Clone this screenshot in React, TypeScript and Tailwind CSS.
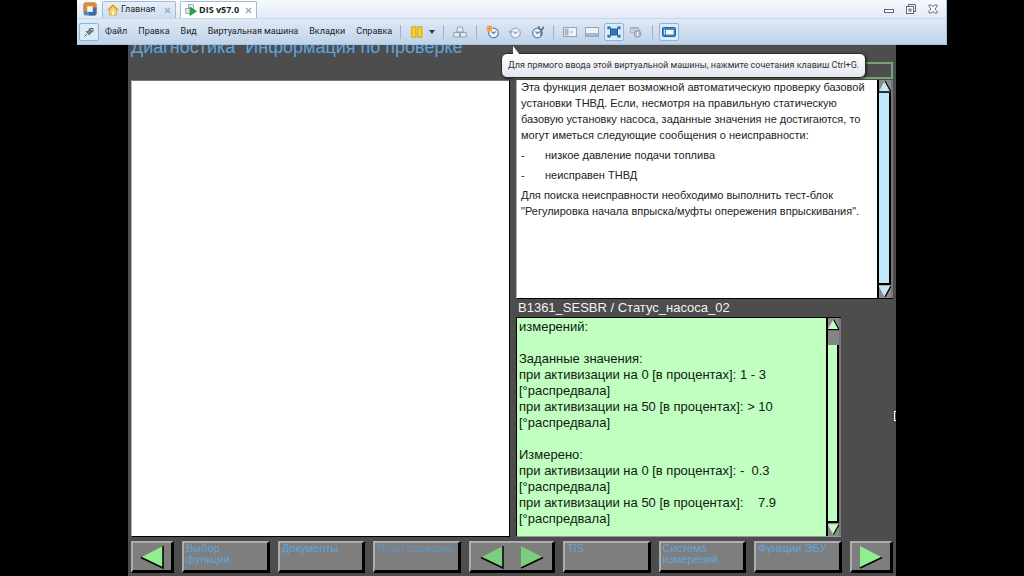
import type { ReactNode } from 'react';
import clsx from 'clsx';

const menuItems = ['Файл', 'Правка', 'Вид', 'Виртуальная машина', 'Вкладки', 'Справка'];

function Logo() {
  return (
    <svg viewBox="0 0 14 14" className="h-3.5 w-3.5">
      <rect x="0.5" y="0.5" width="13" height="13" rx="2" fill="#5d87ad" />
      <path d="M2.5.5h9a2 2 0 0 1 2 2v5H9.8V4.2H4.2V9H.5V2.5a2 2 0 0 1 2-2z" fill="#e58a2e" />
      <path d="M9.8 5.5h3.7v6a2 2 0 0 1-2 2H6V9.8h3.8z" fill="#3f6fa0" />
      <rect x="4.2" y="4.2" width="5.6" height="5.6" fill="#f4f7fb" />
    </svg>
  );
}

function HomeIcon() {
  return (
    <svg viewBox="0 0 12 12" className="h-3 w-3">
      <path d="M2.5 5.5V11h7V5.5L6 2z" fill="#f8d56a" stroke="#c8922a" strokeWidth="0.6" />
      <path d="M.8 6.2 6 1.2l5.2 5" fill="none" stroke="#dc9a2c" strokeWidth="1.4" />
      <path d="M5 11V7.5h2V11z" fill="#fff6d5" />
    </svg>
  );
}

function MachineIcon() {
  return (
    <svg viewBox="0 0 12 12" className="h-3 w-3">
      <rect x="3.5" y="0.7" width="5" height="5" fill="#e8f0f8" stroke="#7d9dbb" strokeWidth="0.8" />
      <rect x="0.7" y="4.5" width="5" height="5" fill="#dce7f2" stroke="#7d9dbb" strokeWidth="0.8" />
      <path d="M5 3l6.5 4.3L5 11.5z" fill="#22a83a" stroke="#148328" strokeWidth="0.6" />
    </svg>
  );
}

function CloseTab() {
  return (
    <button aria-label="Закрыть вкладку" className="ml-auto">
      <svg viewBox="0 0 7 7" className="h-[7px] w-[7px]">
        <path d="m1 1 5 5M6 1 1 6" stroke="#93afcf" strokeWidth="1.5" />
      </svg>
    </button>
  );
}

function PinIcon() {
  return (
    <svg viewBox="0 0 12 12" className="h-3 w-3" fill="none" stroke="#4b5563" strokeWidth="1">
      <path d="M1.5 10.5 4 8M2.8 5.2l4 4M4 6l3-2.8M6.2 8.5 9 5.5M6 2.5l3.8 3.8M7 2.5h3v3" />
      <path d="M4.5 6 7 3.7 8.5 5 6 7.8z" fill="#9aa5b3" />
    </svg>
  );
}

function PauseIcon() {
  return (
    <svg viewBox="0 0 12 12" className="h-3 w-3" fill="#f7cf2b" stroke="#d29a14" strokeWidth="0.8">
      <rect x="0.7" y="0.7" width="4.3" height="10.6" />
      <rect x="6.7" y="0.7" width="4.3" height="10.6" />
    </svg>
  );
}

function KeysIcon() {
  return (
    <svg viewBox="0 0 14 12" className="h-3 w-3.5" fill="#e6ebf1" stroke="#8b98a8" strokeWidth="0.9">
      <path d="M4.5 1h5l.7 5H3.8z" />
      <path d="M1 6.5h5.5V11h-6zM7.5 6.5H13l.5 4.5h-6z" />
    </svg>
  );
}

function ClockIcon({ kind }: { kind: 'take' | 'revert' | 'manage' }) {
  const tone = kind === 'revert' ? '#9aaabc' : '#5f7f9f';
  return (
    <svg viewBox="0 0 14 14" className="h-3.5 w-3.5" fill="none">
      <circle cx="7.5" cy="8" r="4.8" fill="#eaf2fa" stroke={tone} strokeWidth="1.2" />
      <path d="M5.5 6.5l2 2 2.3-2" stroke={tone} strokeWidth="1.1" />
      {kind === 'take' && (
        <path d="M3.5 0v7M0 3.5h7M1 1l5 5M6 1 1 6" stroke="#ef9a2c" strokeWidth="1.1" />
      )}
      {kind === 'revert' && <path d="M0 6h5L2.5 9z" fill={tone} />}
      {kind === 'manage' && (
        <path d="M9.5 1A2 2 0 0 0 11 4.5 2 2 0 0 0 13 1.5M11 4.5V11" stroke="#4f6478" strokeWidth="1.3" />
      )}
    </svg>
  );
}

function SidebarIcon() {
  return (
    <svg viewBox="0 0 14 12" className="h-3 w-3.5">
      <rect x="0.5" y="1.5" width="13" height="9" fill="#eef3f8" stroke="#95a5b8" />
      <rect x="1.5" y="2.5" width="4" height="7" fill="#a9b7c7" />
      <path d="M7 6h3" stroke="#95a5b8" />
    </svg>
  );
}

function ThumbnailBarIcon() {
  return (
    <svg viewBox="0 0 14 12" className="h-3 w-3.5">
      <rect x="0.5" y="1.5" width="13" height="9" fill="#eef3f8" stroke="#95a5b8" />
      <path d="M1 7h12v3H1z" fill="#a9b7c7" />
    </svg>
  );
}

function FullScreenIcon() {
  return (
    <svg viewBox="0 0 14 12" className="h-3 w-3.5">
      <rect x="3.5" y="3" width="7" height="6" fill="#2f78b8" stroke="#1d5a94" />
      <path
        d="M1 3.5V1h3M10 1h3v2.5M13 8.5V11h-3M4 11H1V8.5M1 1l2.5 2M13 1l-2.5 2M1 11l2.5-2M13 11l-2.5-2"
        fill="none"
        stroke="#2d5f90"
        strokeWidth="1.1"
      />
    </svg>
  );
}

function UnityIcon() {
  return (
    <svg viewBox="0 0 12 12" className="h-3 w-3">
      <path d="M.5 1.5h8v5h-8z" fill="#d5dde6" stroke="#a5b2c1" />
      <path d="M.5 2.5h8M2.5 4.5h8" stroke="#a5b2c1" />
      <circle cx="7.5" cy="8" r="3.4" fill="#b4bfcb" stroke="#93a1b1" />
      <path d="M7.5 6v4" stroke="#fff" />
    </svg>
  );
}

function ConsoleIcon() {
  return (
    <svg viewBox="0 0 14 12" className="h-3 w-3.5">
      <rect x="0.5" y="1.5" width="13" height="9" rx="1" fill="#3c86c4" stroke="#20639f" />
      <rect x="4" y="4" width="7.5" height="4.5" fill="#f4f9fd" />
      <path d="M2.5 3.5v5" stroke="#cfe4f5" />
    </svg>
  );
}

function Separator() {
  return <span className="h-3.5 w-px bg-[#9fb2cb]" />;
}

type ToolButtonProps = { label: string; active?: boolean; disabled?: boolean; children: ReactNode };

function ToolButton({ label, active, disabled, children }: ToolButtonProps) {
  return (
    <button
      aria-label={label}
      disabled={disabled}
      className={clsx(
        'flex h-[18px] w-5 items-center justify-center rounded-xs border',
        active ? 'border-[#8db4dc] bg-[#dcebfa]' : 'border-transparent',
      )}
    >
      {children}
    </button>
  );
}

function HostWindow() {
  return (
    <header className="relative z-10 mx-[77px] h-[45px] border-r border-b border-[#a9c1dc] bg-linear-to-b from-[#f8fafd] to-[#c0d3ea] font-[Roboto,sans-serif] text-[9px] text-[#1b1f27]">
      <div className="flex h-[19px] items-end border-b border-[#c9d7e8] pl-1.5">
        <div className="mb-0.5">
          <Logo />
        </div>
        <nav className="ml-[5px] flex gap-1">
          <div className="flex h-[17px] w-[74px] items-center gap-0.5 rounded-t-xs border border-b-0 border-[#a5bad3] bg-linear-to-b from-[#e8eff8] to-[#cddcee] px-1">
            <HomeIcon />
            <a href="#home">Главная</a>
            <CloseTab />
          </div>
          <div className="flex h-[17px] w-[77px] items-center gap-0.5 rounded-t-xs border border-b-0 border-[#a5bad3] bg-white px-1">
            <MachineIcon />
            <a href="#dis" className="font-['Open_Sans',sans-serif] font-bold">
              DIS v57.0
            </a>
            <CloseTab />
          </div>
        </nav>
        <div className="mr-2 mb-1 ml-auto flex items-center gap-3">
          <button aria-label="Свернуть">
            <svg viewBox="0 0 10 10" className="h-2.5 w-2.5">
              <rect x="0.5" y="5.5" width="9" height="3" fill="#fff" stroke="#5c6878" />
            </svg>
          </button>
          <button aria-label="Восстановить">
            <svg viewBox="0 0 10 10" className="h-2.5 w-2.5" fill="none" stroke="#5c6878">
              <path d="M2.5 2.5v-2h7v7h-2" />
              <rect x="0.5" y="2.5" width="7" height="7" fill="#fff" />
              <rect x="3" y="5" width="2" height="2" />
            </svg>
          </button>
          <button aria-label="Закрыть">
            <svg viewBox="0 0 10 10" className="h-2.5 w-2.5">
              <path
                d="M1 1h2.5L5 2.8 6.5 1H9v1.5L7 5l2 2.5V9H6.5L5 7.2 3.5 9H1V7.5L3 5 1 2.5z"
                fill="#fff"
                stroke="#5c6878"
              />
            </svg>
          </button>
        </div>
      </div>
      <div className="flex h-[25px] items-center pl-0.5">
        <ToolButton label="Закрепить" active>
          <PinIcon />
        </ToolButton>
        <nav className="ml-1.5 flex gap-[11px]">
          {menuItems.map((item) => (
            <button key={item}>{item}</button>
          ))}
        </nav>
        <div className="ml-2 flex items-center">
          <Separator />
          <div className="mx-1.5 flex">
            <ToolButton label="Приостановить">
              <PauseIcon />
            </ToolButton>
            <button aria-label="Питание" className="px-0.5">
              <svg viewBox="0 0 6 4" className="h-1 w-1.5">
                <path d="M0 0h6L3 4z" fill="#1f3864" />
              </svg>
            </button>
          </div>
          <Separator />
          <div className="mx-1.5">
            <ToolButton label="Ctrl+Alt+Del">
              <KeysIcon />
            </ToolButton>
          </div>
          <Separator />
          <div className="mx-1.5 flex gap-0.5">
            <ToolButton label="Создать снимок">
              <ClockIcon kind="take" />
            </ToolButton>
            <ToolButton label="Вернуться к снимку" disabled>
              <ClockIcon kind="revert" />
            </ToolButton>
            <ToolButton label="Управление снимками">
              <ClockIcon kind="manage" />
            </ToolButton>
          </div>
          <Separator />
          <div className="mx-1.5 flex gap-0.5">
            <ToolButton label="Библиотека">
              <SidebarIcon />
            </ToolButton>
            <ToolButton label="Панель эскизов">
              <ThumbnailBarIcon />
            </ToolButton>
            <ToolButton label="Полный экран" active>
              <FullScreenIcon />
            </ToolButton>
            <ToolButton label="Единство" disabled>
              <UnityIcon />
            </ToolButton>
          </div>
          <Separator />
          <div className="ml-1.5">
            <ToolButton label="Консоль" active>
              <ConsoleIcon />
            </ToolButton>
          </div>
        </div>
      </div>
    </header>
  );
}

function InputHint() {
  return (
    <div
      role="tooltip"
      className="absolute top-2 left-[373px] z-10 flex h-[25px] items-center rounded-md border border-[#2b2b2b] bg-linear-to-b from-white to-[#e4e5f0] px-1.5 font-[Roboto,sans-serif] text-[9px] whitespace-nowrap text-[#33343a] shadow-[1px_1px_2px_rgba(0,0,0,0.6)]"
    >
      <svg viewBox="0 0 9 9" className="absolute -top-2 left-2.5 h-[9px] w-[9px]">
        <path d="M1 9V0l7 9z" fill="#fff" />
      </svg>
      Для прямого ввода этой виртуальной машины, нажмите сочетания клавиш Ctrl+G.
    </div>
  );
}

function ScrollArrow({ down, fill }: { down?: boolean; fill: string }) {
  return (
    <button aria-label={down ? 'Вниз' : 'Вверх'} className="bg-[#8a8a8a]">
      <svg viewBox="0 0 12 13" className="h-[13px] w-full">
        {down ? (
          <>
            <path d="M0 1h12L6 12z" fill={fill} stroke="#ddd" strokeWidth="0.8" />
            <path d="M12 1 6 12" stroke="#000" strokeWidth="1.4" />
          </>
        ) : (
          <>
            <path d="M0 12 6 1l6 11z" fill={fill} stroke="#ddd" strokeWidth="0.8" />
            <path d="M6 1l6 11H0" fill="none" stroke="#000" strokeWidth="1.3" />
          </>
        )}
      </svg>
    </button>
  );
}

function Description() {
  return (
    <section className="flex h-[219px] border-b border-l border-b-black border-l-[#b5b5b5] bg-white">
      <div className="flex-1 pl-1 font-['Liberation_Sans',sans-serif] text-[11px] leading-4 text-[#222]">
        <p className="-mt-px">
          Эта функция делает возможной автоматическую проверку базовой
          <br />
          установки ТНВД. Если, несмотря на правильную статическую
          <br />
          базовую установку насоса, заданные значения не достигаются, то
          <br />
          могут иметься следующие сообщения о неисправности:
        </p>
        <ul className="my-1 space-y-1">
          <li className="flex">
            <span className="w-6">-</span>низкое давление подачи топлива
          </li>
          <li className="flex">
            <span className="w-6">-</span>неисправен ТНВД
          </li>
        </ul>
        <p>
          Для поиска неисправности необходимо выполнить тест-блок
          <br />
          "Регулировка начала впрыска/муфты опережения впрыскивания".
        </p>
      </div>
      <div className="flex w-4 flex-col border-x-2 border-l-black border-r-[#777] bg-[#555]">
        <ScrollArrow fill="#bde9fb" />
        <div className="flex-1 border-r-2 border-b-2 border-black bg-[#bde9fb]" />
        <ScrollArrow down fill="#bde9fb" />
      </div>
    </section>
  );
}

const readings = `измерений:

Заданные значения:
при активизации на 0 [в процентах]: 1 - 3
[°распредвала]
при активизации на 50 [в процентах]: > 10
[°распредвала]

Измерено:
при активизации на 0 [в процентах]: -  0.3
[°распредвала]
при активизации на 50 [в процентах]:    7.9
[°распредвала]`;

function Readings() {
  return (
    <section className="mr-[52px] flex flex-1 border-t border-b border-l border-t-black border-b-[#9a9a9a] border-l-black bg-[#c1ffc1]">
      <pre className="flex-1 pt-px pl-0.5 font-['Liberation_Sans',sans-serif] text-[13px] leading-4 text-[#10200f]">
        {readings}
      </pre>
      <div className="flex w-[15px] flex-col border-x-2 border-l-black border-r-[#777] bg-[#555]">
        <ScrollArrow fill="#c1ffc1" />
        <div className="h-3.5 bg-[#858585]" />
        <div className="flex-1 border-r-2 border-b-2 border-black bg-[#c1ffc1]" />
        <ScrollArrow down fill="#c1ffc1" />
      </div>
    </section>
  );
}

function Arrow({ left, fill = '#90ee90' }: { left?: boolean; fill?: string }) {
  return (
    <svg viewBox="0 0 24 24" className="h-6 w-6">
      {left ? (
        <>
          <path d="M23 1v22L1 12.5z" fill={fill} />
          <path d="M23 1v22L1 12.5" fill="none" stroke="#000" strokeWidth="1.5" />
        </>
      ) : (
        <>
          <path d="M1 1v22l22-10.5z" fill={fill} />
          <path d="M1 23l22-10.5" fill="none" stroke="#000" strokeWidth="1.5" />
        </>
      )}
    </svg>
  );
}

const bevel =
  'border-t-2 border-l-2 border-r-3 border-b-3 border-t-[#adadad] border-l-[#adadad] border-r-black border-b-black bg-[#7e7e7e]';

function FunctionButton({ children, disabled }: { children: ReactNode; disabled?: boolean }) {
  return (
    <button
      disabled={disabled}
      className={clsx(
        bevel,
        'flex flex-1 items-start pl-0.5 text-left text-[11px] leading-[11px] whitespace-nowrap',
        disabled ? 'text-[#6493b8]' : 'text-[#5ea5dc]',
      )}
    >
      {children}
    </button>
  );
}

function FunctionBar() {
  return (
    <footer className="mt-1 mb-[3px] flex h-8 gap-2">
      <button aria-label="Назад" className={clsx(bevel, 'flex w-[43px] items-center justify-center')}>
        <Arrow left />
      </button>
      <FunctionButton>
        Выбор
        <br />
        функции
      </FunctionButton>
      <FunctionButton>Документы</FunctionButton>
      <FunctionButton disabled>План проверки</FunctionButton>
      <div className={clsx(bevel, 'flex flex-1 items-center justify-center gap-4')}>
        <button aria-label="Предыдущая страница">
          <Arrow left fill="#7ccd7c" />
        </button>
        <button aria-label="Следующая страница">
          <Arrow fill="#7ccd7c" />
        </button>
      </div>
      <FunctionButton>TIS</FunctionButton>
      <FunctionButton>
        Система
        <br />
        измерений
      </FunctionButton>
      <FunctionButton>Функции ЭБУ</FunctionButton>
      <button aria-label="Вперёд" className={clsx(bevel, 'flex w-[43px] items-center justify-center')}>
        <Arrow />
      </button>
    </footer>
  );
}

export default function App() {
  return (
    <div className="flex min-h-screen flex-col bg-black">
      <HostWindow />
      <main className="relative mx-32 flex flex-1 flex-col bg-[#4d4d4d] px-[3px] font-['Liberation_Sans',sans-serif]">
        <InputHint />
        <div className="flex h-[35px] gap-1.5">
          <h1 className="-mt-2 flex-1 text-lg leading-5 whitespace-pre text-[#5ea5dc]">
            Диагностика  Информация по проверке
          </h1>
          <div className="mt-[17px] mb-px flex-1 border-2 border-[#74a374]" />
        </div>
        <div className="flex flex-1 gap-1.5">
          <section className="flex-1 border border-t-[#777] border-r-black border-b-black border-l-[#b5b5b5] bg-white" />
          <div className="flex flex-1 flex-col">
            <Description />
            <h2 className="pl-0.5 text-[13px] leading-[18px] text-[#f2f2f2]">B1361_SESBR / Статус_насоса_02</h2>
            <Readings />
          </div>
        </div>
        <FunctionBar />
        <span className="absolute top-[366px] right-0 h-2.5 w-0.5 border border-r-0 border-white" />
      </main>
    </div>
  );
}
